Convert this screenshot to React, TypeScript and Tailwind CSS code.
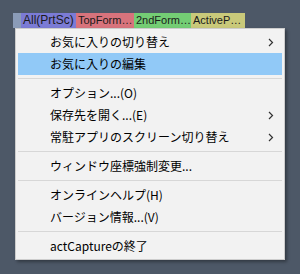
import React from "react";

const font = { fontFamily: '"Noto Sans CJK JP", "Noto Sans", sans-serif' };
const tabFont = { fontFamily: '"Liberation Sans", Arial, sans-serif' };

function Chevron() {
  return (
    <svg width="6" height="9" viewBox="0 0 6 9" className="absolute right-[8px] top-[7px]">
      <path d="M1 1 L4.5 4.5 L1 8" fill="none" stroke="#333" strokeWidth="1.2" />
    </svg>
  );
}

function Item({ label, sub, active }: { label: string; sub?: boolean; active?: boolean }) {
  return (
    <div
      className={`relative h-[22px] flex items-center pl-[32px] text-[12px] leading-none text-[#000] ${
        active ? "bg-[#91c9f7]" : ""
      }`}
    >
      <span>{label}</span>
      {sub && <Chevron />}
    </div>
  );
}

function Sep() {
  return (
    <div className="h-[7px] flex items-center">
      <div className="h-px w-full bg-[#d7d7d7]" />
    </div>
  );
}

export default function App() {
  return (
    <div className="w-[300px] h-[274px] bg-[#4d5867] relative overflow-hidden" style={font}>
      <div
        className="absolute left-[13px] top-[13px] flex h-[15px] leading-[15px] text-[#1a1a1a]"
        style={tabFont}
      >
        <div className="w-[8px] bg-[#8b9cb8]" />
        <div className="w-[55px] bg-[#7b7bd5] pl-[2px] text-[12px] whitespace-nowrap overflow-hidden">All(PrtSc)</div>
        <div className="w-[58px] bg-[#d8737c] pl-[2px] text-[11px] whitespace-nowrap overflow-hidden">TopForm…</div>
        <div className="w-[57px] bg-[#74cd74] pl-[2px] text-[11px] whitespace-nowrap overflow-hidden">2ndForm…</div>
        <div className="w-[54px] bg-[#c9c97a] pl-[2px] text-[11px] whitespace-nowrap overflow-hidden">ActiveP…</div>
      </div>
      <div className="absolute left-[15px] top-[28px] w-[270px] h-[232px] bg-[#f2f2f2] border border-[#cdcdcd] py-[2px] px-[2px] shadow-[2px_2px_3px_rgba(0,0,0,0.35)]">
        <Item label="お気に入りの切り替え" sub />
        <Item label="お気に入りの編集" active />
        <Sep />
        <Item label="オプション...(O)" />
        <Item label="保存先を開く...(E)" sub />
        <Item label="常駐アプリのスクリーン切り替え" sub />
        <Sep />
        <Item label="ウィンドウ座標強制変更..." />
        <Sep />
        <Item label="オンラインヘルプ(H)" />
        <Item label="バージョン情報...(V)" />
        <Sep />
        <Item label="actCaptureの終了" />
      </div>
    </div>
  );
}
